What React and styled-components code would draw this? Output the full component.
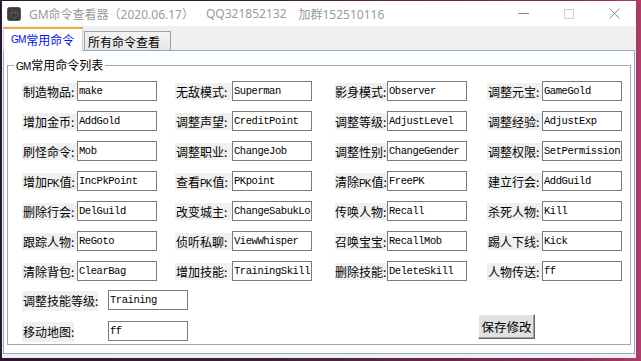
import React from "react";
import styled, { createGlobalStyle, css } from "styled-components";

const Global = createGlobalStyle`
  html, body { margin: 0; padding: 0; overflow: hidden; }
  body { font-family: "Noto Sans CJK SC", "Noto Sans", sans-serif; }
  * { box-sizing: border-box; }
`;

const Desktop = styled.div`
  width: 641px;
  height: 361px;
  padding: 1px 5px 3px 2px;
  background: linear-gradient(90deg, #2b1830 0%, #3a1f3a 40%, #8a2a55 90%, #b03a68 100%);
  overflow: hidden;
`;

const Window = styled.div`
  width: 634px;
  height: 357px;
  display: flex;
  flex-direction: column;
  background: #f0f0f0;
  overflow: hidden;
`;

const TitleBar = styled.div`
  height: 25px;
  flex: none;
  display: flex;
  align-items: center;
  background: #ffffff;
  padding-left: 5px;
`;

const TitleText = styled.div`
  display: flex;
  gap: 12px;
  margin-left: 8px;
  font-family: "Noto Sans", "Noto Sans CJK SC", sans-serif;
  font-size: 12px;
  color: #9a9a9a;
  white-space: nowrap;
`;

const Controls = styled.div`
  margin-left: auto;
  display: flex;
  height: 100%;
`;

const ControlButton = styled.div`
  width: ${(p) => p.$w || 46}px;
  height: 100%;
  display: flex;
  align-items: center;
  justify-content: center;
`;

const Body = styled.div`
  flex: 1;
  display: flex;
  flex-direction: column;
  padding: 0 0 5px 1px;
`;

const TabStrip = styled.div`
  height: 24px;
  flex: none;
  display: flex;
  align-items: flex-end;
  position: relative;
  z-index: 1;
`;

const Tab = styled.div`
  font-size: 12px;
  white-space: nowrap;
  display: flex;
  align-items: center;
  ${(p) =>
    p.$active
      ? css`
          width: 80px;
          height: 24px;
          margin-bottom: -1px;
          padding: 0 0 1px 7px;
          color: #0010ff;
          background: #ffffff;
          border-top: 2px solid #f3a83a;
          border-left: 1px solid #c7d3dd;
          border-right: 1px solid #c7d3dd;
        `
      : css`
          width: 87px;
          height: 19px;
          padding: 0 0 0 3px;
          color: #000000;
          background: linear-gradient(#f4f4f4, #e6e6e6);
          border: 1px solid #8fa6b8;
          border-bottom: none;
          margin-left: 1px;
        `}
`;

const Small = styled.span`
  font-family: "Liberation Sans", sans-serif;
  font-size: 10px;
  letter-spacing: -0.9px;
  margin-right: 1px;
`;

const Panel = styled.div`
  width: 632px;
  height: 304px;
  border: 1px solid #93aabd;
  background: #fcfdfe;
  padding: 14px 3px 0 3px;
`;

const GroupBox = styled.div`
  position: relative;
  height: 280px;
  border: 1px solid #a8a8a8;
  background: #ffffff;
  padding: 15px 0 0 14px;
`;

const Legend = styled.div`
  position: absolute;
  top: -9px;
  left: 6px;
  padding: 0 2px;
  background: #ffffff;
  font-size: 12px;
  line-height: 16px;
  color: #000;
`;

const Grid = styled.div`
  display: grid;
  grid-template-columns: 153px 160px 152px 135px;
  grid-auto-rows: 20px;
  row-gap: 10px;
`;

const Field = styled.div`
  display: flex;
  align-items: center;
`;

const Label = styled.div`
  width: ${(p) => (p.$w ? `${p.$w}px` : "auto")};
  height: ${(p) => p.$h || 17}px;
  background: #f0f0f0;
  font-size: 12px;
  line-height: ${(p) => p.$h || 17}px;
  padding-left: ${(p) => (p.$w && p.$w < 54 ? 0 : 1)}px;
  white-space: nowrap;
  overflow: hidden;
  color: #000;
  margin-top: 1px;
`;

const TextBox = styled.input`
  width: 80px;
  height: 20px;
  border: 1px solid #7a7a7a;
  background: #ffffff;
  padding: 0 0 0 1px;
  margin: 0;
  font-family: "Liberation Mono", "DejaVu Sans Mono", monospace;
  font-size: 10.5px;
  letter-spacing: -0.45px;
  color: #000;
  outline: none;
  border-radius: 0;
`;

const Bottom = styled.div`
  display: flex;
  align-items: flex-end;
  margin-top: 9px;
`;

const BottomRows = styled.div`
  display: grid;
  grid-template-columns: 86px 80px;
  grid-auto-rows: 20px;
  row-gap: 11px;
`;

const SaveButton = styled.button`
  width: 57px;
  height: 25px;
  margin: 0 0 2px 290px;
  padding: 0;
  white-space: nowrap;
  font-family: "Noto Sans CJK SC", sans-serif;
  font-size: 12.5px;
  color: #000;
  background: #e1e1e1;
  border: 1px solid;
  border-color: #ffffff #646464 #646464 #ffffff;
  box-shadow: inset -1px -1px 0 #a0a0a0;
`;

const AppIcon = () => (
  <svg width="14" height="14" viewBox="0 0 14 14">
    <rect x="0.5" y="0.5" width="13" height="13" rx="2" fill="#3d3d3d" stroke="#555" />
    <circle cx="7" cy="7" r="3.8" fill="none" stroke="#777" strokeWidth="0.8" strokeDasharray="1 1" />
    <circle cx="5.5" cy="6" r="0.7" fill="#888" />
    <circle cx="8.5" cy="6" r="0.7" fill="#888" />
  </svg>
);

const rows = [
  [["制造物品", "make"], ["无敌模式", "Superman"], ["影身模式", "Observer"], ["调整元宝", "GameGold"]],
  [["增加金币", "AddGold"], ["调整声望", "CreditPoint"], ["调整等级", "AdjustLevel"], ["调整经验", "AdjustExp"]],
  [["刷怪命令", "Mob"], ["调整职业", "ChangeJob"], ["调整性别", "ChangeGender"], ["调整权限", "SetPermission"]],
  [["增加PK值", "IncPkPoint"], ["查看PK值", "PKpoint"], ["清除PK值", "FreePK"], ["建立行会", "AddGuild"]],
  [["删除行会", "DelGuild"], ["改变城主", "ChangeSabukLo"], ["传唤人物", "Recall"], ["杀死人物", "Kill"]],
  [["跟踪人物", "ReGoto"], ["侦听私聊", "ViewWhisper"], ["召唤宝宝", "RecallMob"], ["踢人下线", "Kick"]],
  [["清除背包", "ClearBag"], ["增加技能", "TrainingSkill"], ["删除技能", "DeleteSkill"], ["人物传送", "ff"]],
];

const labelWidths = [55, 57, 52, 55];

const renderLabel = (text) => {
  const parts = text.split("PK");
  if (parts.length === 1) return text + ":";
  return (
    <>
      {parts[0]}
      <Small>PK</Small>
      {parts[1]}:
    </>
  );
};

export default function App() {
  return (
    <>
      <Global />
      <Desktop>
        <Window>
          <TitleBar>
            <AppIcon />
            <TitleText>
              <span>GM命令查看器（2020.06.17）</span>
              <span>QQ321852132</span>
              <span>加群152510116</span>
            </TitleText>
            <Controls>
              <ControlButton>
                <svg width="11" height="11" viewBox="0 0 11 11">
                  <line x1="0" y1="5.5" x2="11" y2="5.5" stroke="#8a8a8a" strokeWidth="1" />
                </svg>
              </ControlButton>
              <ControlButton>
                <svg width="10" height="10" viewBox="0 0 10 10">
                  <rect x="0.5" y="0.5" width="9" height="9" fill="none" stroke="#cfcfcf" strokeWidth="1" />
                </svg>
              </ControlButton>
              <ControlButton $w={44}>
                <svg width="11" height="11" viewBox="0 0 11 11">
                  <path d="M0.5 0.5 L10.5 10.5 M10.5 0.5 L0.5 10.5" stroke="#8a8a8a" strokeWidth="1" />
                </svg>
              </ControlButton>
            </Controls>
          </TitleBar>
          <Body>
            <TabStrip>
              <Tab $active>
                <Small>GM</Small>常用命令
              </Tab>
              <Tab>所有命令查看</Tab>
            </TabStrip>
            <Panel>
              <GroupBox>
                <Legend>
                  <Small>GM</Small>常用命令列表
                </Legend>
                <Grid>
                  {rows.map((row, r) =>
                    row.map(([label, value], c) => (
                      <Field key={`${r}-${c}`}>
                        <Label $w={labelWidths[c]}>{renderLabel(label)}</Label>
                        <TextBox readOnly defaultValue={value} />
                      </Field>
                    ))
                  )}
                </Grid>
                <Bottom>
                  <BottomRows>
                    <Field>
                      <Label $h={20}>调整技能等级: </Label>
                    </Field>
                    <TextBox readOnly defaultValue="Training" />
                    <Field>
                      <Label $h={20}>移动地图: </Label>
                    </Field>
                    <TextBox readOnly defaultValue="ff" />
                  </BottomRows>
                  <SaveButton>保存修改</SaveButton>
                </Bottom>
              </GroupBox>
            </Panel>
          </Body>
        </Window>
      </Desktop>
    </>
  );
}
